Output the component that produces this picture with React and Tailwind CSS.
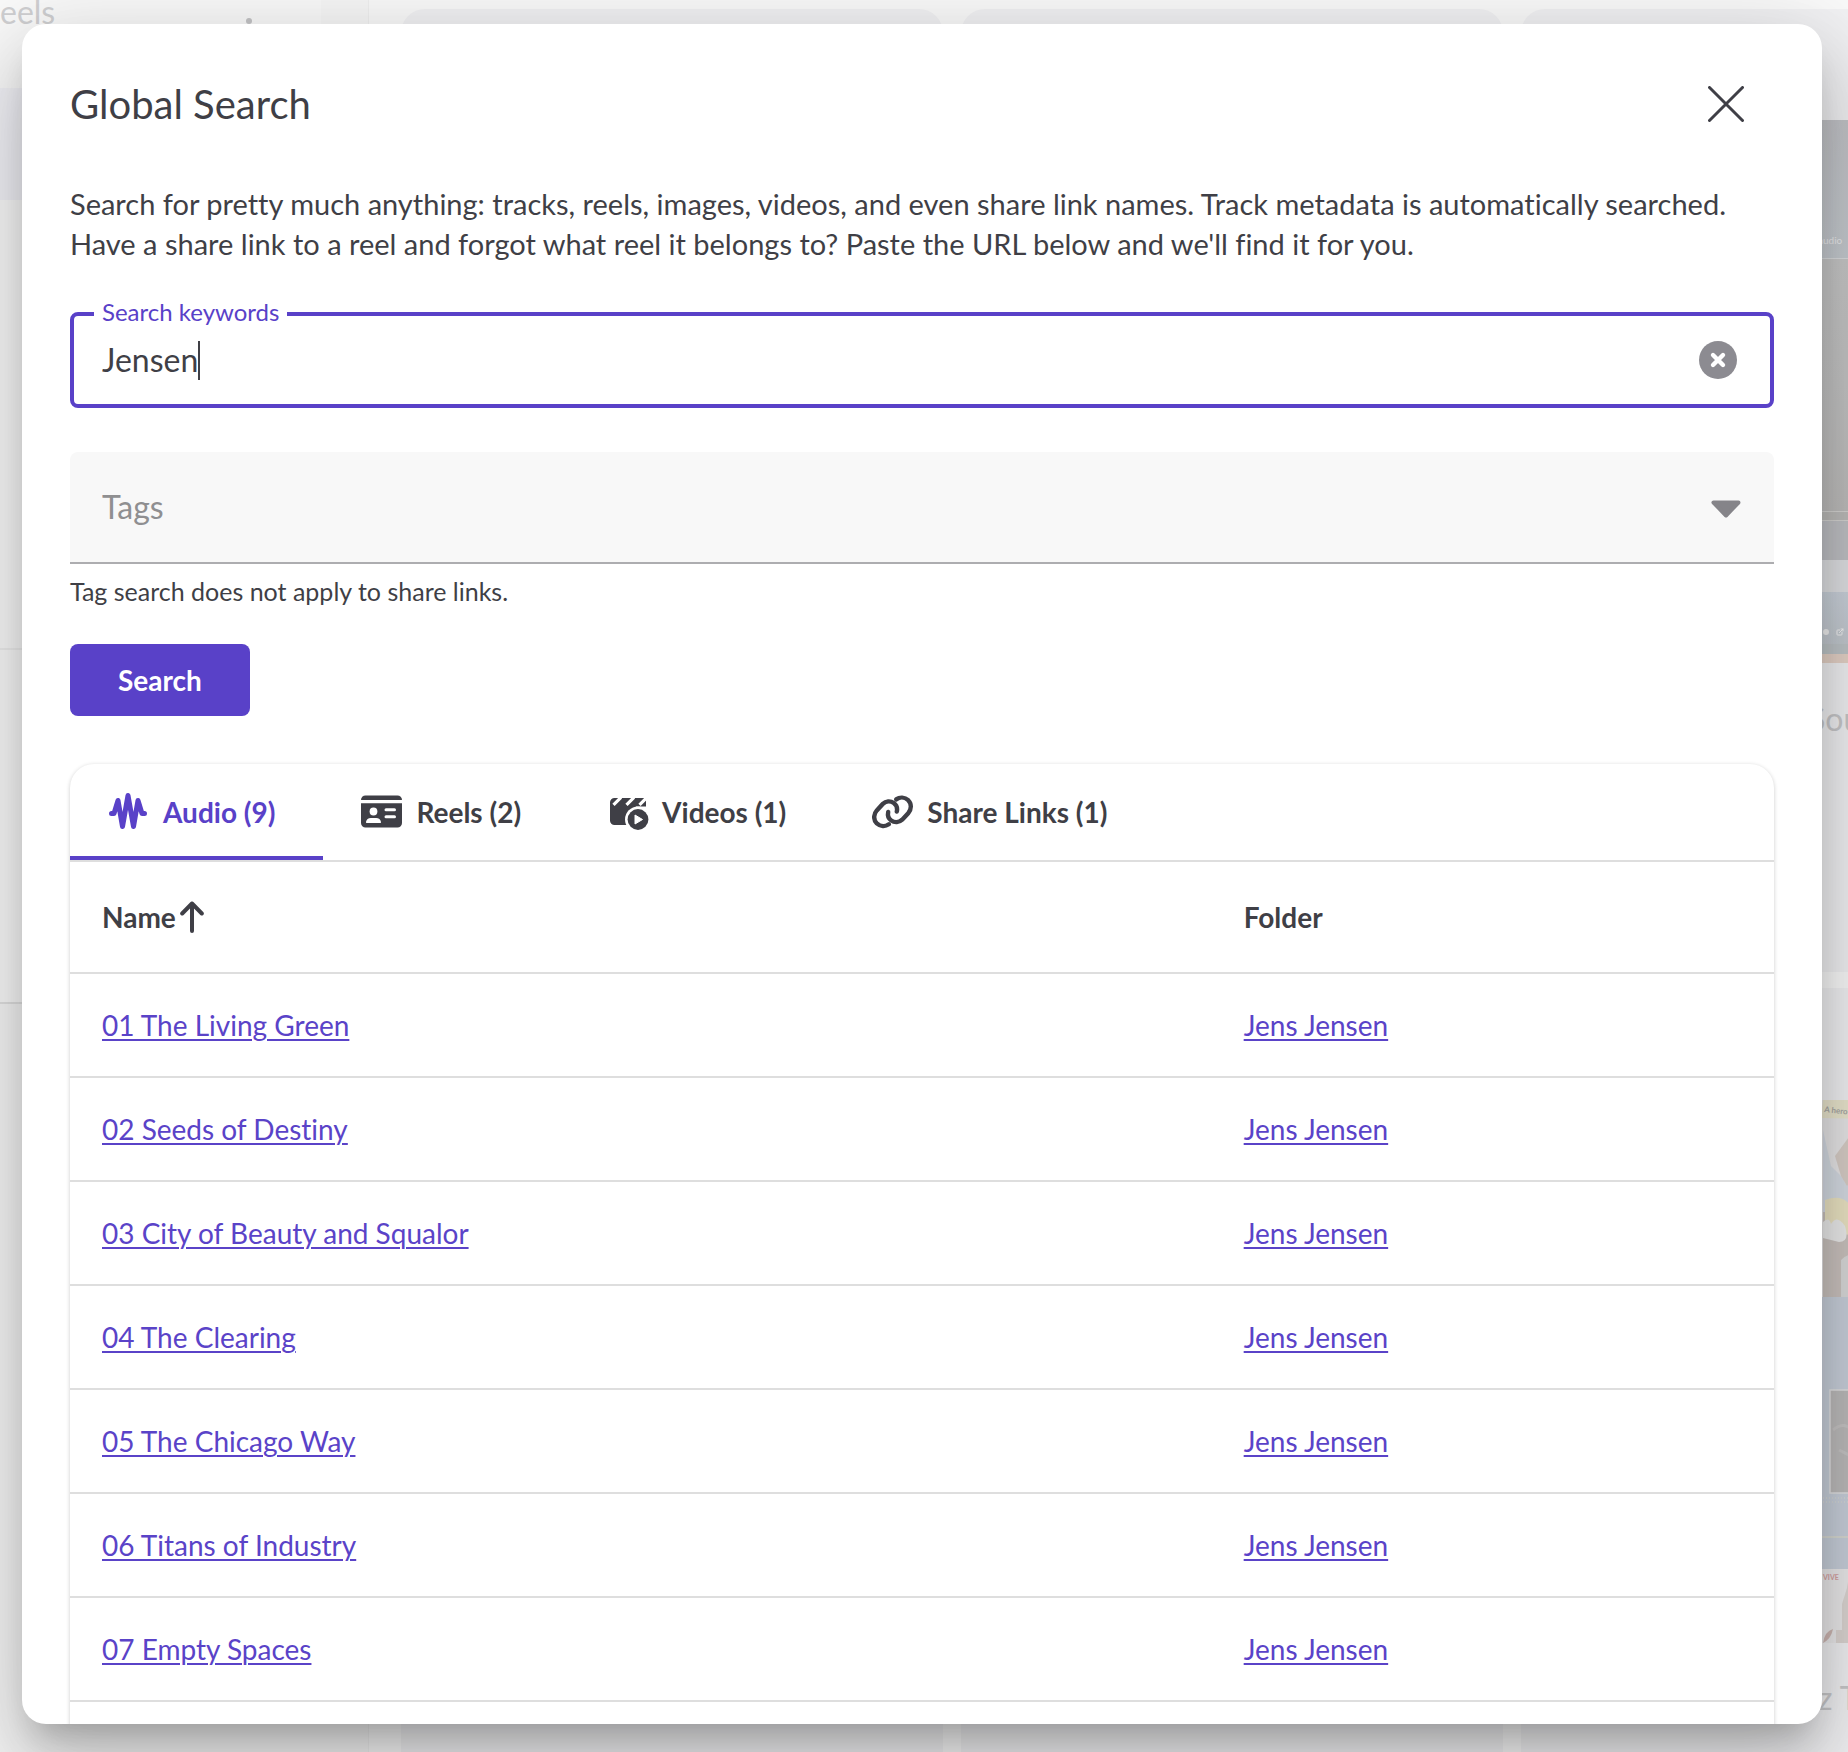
import { useState } from "react";
import { ExternalLink } from "lucide-react";

const tracks = [
  { name: "01 The Living Green", folder: "Jens Jensen" },
  { name: "02 Seeds of Destiny", folder: "Jens Jensen" },
  { name: "03 City of Beauty and Squalor", folder: "Jens Jensen" },
  { name: "04 The Clearing", folder: "Jens Jensen" },
  { name: "05 The Chicago Way", folder: "Jens Jensen" },
  { name: "06 Titans of Industry", folder: "Jens Jensen" },
  { name: "07 Empty Spaces", folder: "Jens Jensen" },
];

function WaveIcon() {
  return (
    <svg
      viewBox="0 0 42 40"
      className="h-10 w-[42px]"
      fill="none"
      stroke="currentColor"
      strokeWidth="5"
      strokeLinecap="round"
      strokeLinejoin="round"
    >
      <path d="M3.5 21.5H6L10 8.5l4.5 26L20 3.5l5.5 31L30 8.500l4 13h2.500" />
    </svg>
  );
}

function ReelIcon() {
  return (
    <svg viewBox="0 0 42 40" className="h-10 w-[42px]" fill="currentColor">
      <path d="M4.500 3.500h32a4.500 4.500 0 0 1 4.500 4.500H0a4.500 4.500 0 0 1 4.500-4.500Z" />
      <path d="M0 11.200h41V31a4.500 4.500 0 0 1-4.500 4.500h-32A4.500 4.500 0 0 1 0 31V11.200Z" />
      <g fill="#fff">
        <ellipse cx="12.500" cy="19.600" rx="3.900" ry="4" />
        <path d="M10 26h5a5 5 0 0 1 5 4c.1.600-.3 1-.9 1H5.900c-.6 0-1-.4-.9-1a5 5 0 0 1 5-4Z" />
        <rect x="23.500" y="16.200" width="11.500" height="3" rx="1.500" />
        <rect x="23.500" y="23.200" width="11.500" height="3" rx="1.500" />
      </g>
    </svg>
  );
}

function VideoIcon() {
  return (
    <svg viewBox="0 0 42 40" className="h-10 w-[42px]" fill="currentColor">
      <path d="M7.500 6H39v27H7.500A4.500 4.500 0 0 1 3 28.500v-18A4.500 4.500 0 0 1 7.500 6Z" />
      <path d="M6.500 12.800l7.500-7.500M19.500 12.800l7.500-7.500M32.500 12.800l7.500-7.500" stroke="#fff" strokeWidth="3.200" />
      <path d="M29 14.500h13V40H29z" fill="#fff" />
      <circle cx="31" cy="27.500" r="13" fill="#fff" />
      <circle cx="31" cy="27.500" r="10.400" />
      <path d="M28 23l7.500 4.500L28 32z" fill="#fff" stroke="#fff" strokeLinejoin="round" />
    </svg>
  );
}

function ShareIcon() {
  return (
    <svg
      viewBox="0 0 42 40"
      className="h-10 w-[42px]"
      fill="none"
      stroke="currentColor"
      strokeWidth="4.400"
      strokeLinecap="round"
    >
      <path d="M16.200 20c-.8 3.500.3 6.500 3 8.500 3.500 2.500 8 2 11-.8l6-6.500c3.500-4 3.500-9.500 0-13-3.500-3.200-8.500-3.300-12-.8" />
      <path d="M24.800 19.600c.8-3.500-.3-6.500-3-8.500-3.500-2.500-8-2-11 .8l-6 6.500c-3.500 4-3.500 9.500 0 13 3.500 3.200 8.500 3.300 12 .8" />
    </svg>
  );
}

const tabs = [
  { id: "audio", label: "Audio (9)", Icon: WaveIcon },
  { id: "reels", label: "Reels (2)", Icon: ReelIcon },
  { id: "videos", label: "Videos (1)", Icon: VideoIcon },
  { id: "links", label: "Share Links (1)", Icon: ShareIcon },
];

// The reels page, washed out behind the open dialog
function PageBehind() {
  return (
    <div aria-hidden="true" className="absolute inset-0 flex overflow-hidden bg-[#fafafa]">
      <aside className="flex w-[321px] shrink-0 flex-col">
        <div className="flex h-[88px] items-start justify-between pr-[69px]">
          <span className="text-[32px] leading-[24px] text-[#d0d0d2]">eels</span>
          <span className="mt-[18px] size-1.5 rounded-full bg-[#c4c4c6]" />
        </div>
        <div className="h-28 bg-[#f3f3f8]" />
        <div className="h-[450px] border-b-2 border-[#efefef]" />
        <div className="h-[354px] border-b-2 border-[#e2e2e2]" />
        <div className="flex-1 bg-[#f7f7f7]" />
      </aside>
      <div className="w-12 shrink-0 border-r border-[#f0f0f0] bg-[#f7f7f7]" />
      <main className="flex flex-1 gap-[18px] pt-[9px] pl-8">
        <div className="w-[542px] shrink-0 rounded-t-3xl bg-[#f2f2f4]" />
        <div className="w-[542px] shrink-0 rounded-t-3xl bg-[#f2f2f4]" />
        <div className="flex w-[542px] shrink-0 flex-col gap-4">
          <div className="h-[963px] shrink-0 overflow-hidden rounded-3xl bg-[#f2f2f4] pt-[111px]">
            <div className="h-[139px] border-b border-[#dcdee0] bg-linear-to-b from-[#c3c4c8] to-[#c6cbd0] pt-[110px] pl-[297px] text-[10px] leading-5 text-[#ececee]">
              audio
            </div>
            <div className="h-[252px] bg-linear-to-b from-[#c8c8c8] via-[#c4c4c4] to-[#bebdbc]" />
            <div className="h-[10px] border-y border-[#d6d5d3] bg-[#bdbcba]" />
            <div className="h-[39px] bg-[#c0c1c5]" />
            <div className="h-8 bg-[#e0e1e4]" />
            <div className="flex h-[52px] items-end gap-[7px] bg-linear-to-b from-[#cbd2db] to-[#c3c9cf] pb-2 pl-[302px] text-[#f4f4f4]">
              <span className="mb-px size-1.5 rounded-full bg-[#f0f0f0]" />
              <ExternalLink size={8} strokeWidth={3} />
            </div>
            <div className="h-[10px] bg-[#bfc5c8]" />
            <div className="h-[9px] bg-[#e6d3c8]" />
            <div className="pt-[36px] pl-[287px] text-[32px] leading-[40px] text-[#c9c9cb]">Sou</div>
          </div>
          <div className="flex-1 rounded-t-3xl bg-[#f2f2f4] pt-28">
            <svg viewBox="0 0 542 543" className="h-[543px] w-full">
              <rect width="542" height="197" fill="#e8e7e8" />
              <path d="M302 0h240v8q-18 8-28 6t-14-4q-20 12-200 8Z" fill="#ebe7cf" />
              <path d="M302 30l8 36 22 22-4-32 14-24v165H302Z" fill="#d6dce4" />
              <path d="M314 56l16-22 12-10v42l-16 20-6-10Z" fill="#d9cfc8" />
              <path d="M302 112h40v85H302Z" fill="#cbc3bf" />
              <path d="M304 100q16-6 24 4t14 2v28q-24 4-38-10Z" fill="#ece5c4" />
              <path d="M302 122q6-6 8 2 6-10 14 2 5 16-6 16-8-2-16-4Z" fill="#ececec" />
              <path d="M320 160q10-10 22-2v39h-22Z" fill="#dadada" />
              <text x="303" y="12" fontSize="8" fontWeight="bold" fill="#a9a9a6" transform="rotate(6 303 12)">
                A hero
              </text>
              <rect y="197" width="542" height="272" fill="#c9d0db" />
              <rect x="309" y="290" width="233" height="103" fill="#bdbbbb" stroke="#e2e2e4" strokeWidth="1.500" />
              <path d="M312 330q12-10 20 2t10 6M318 350l16 8" fill="none" stroke="#c6c4c4" strokeWidth="3" />
              <path d="M302 398h40M302 402h40" stroke="#dddcd4" strokeWidth="1" strokeDasharray="1 2" />
              <path d="M0 437h542" stroke="#e6e3cc" />
              <rect y="469" width="542" height="74" fill="#ebeaeb" />
              <text x="302" y="480" fontSize="7" fontWeight="bold" fill="#d6a3a3">
                VIVE
              </text>
              <path d="M302 543q2-12 10-14-2 10-10 14Z" fill="#cfb9b4" />
              <path d="M315 543v-13h6v-26l5-16 2-12h14v67Z" fill="#ddd6d3" />
            </svg>
            <div className="pt-[33px] pl-[297px] text-[32px] leading-[44px] text-[#c9c9cb]">z T</div>
          </div>
        </div>
      </main>
    </div>
  );
}

function ResultsTable() {
  return (
    <table className="w-full table-fixed text-left">
      <thead>
        <tr className="h-[111px] border-b-2 border-[#dedede]">
          <th className="w-[67%] px-8 font-bold">
            <button type="button" className="flex items-center gap-1">
              Name
              <svg
                viewBox="0 0 24 32"
                className="h-8 w-6"
                fill="none"
                stroke="currentColor"
                strokeWidth="4"
                strokeLinecap="round"
                strokeLinejoin="round"
              >
                <path d="M12 30V2.500M2.200 12.500L12 2.500l9.800 10" />
              </svg>
            </button>
          </th>
          <th className="px-8 font-bold">Folder</th>
        </tr>
      </thead>
      <tbody className="text-[#5a43c8]">
        {tracks.map((track) => (
          <tr key={track.name} className="h-[104px] border-b-2 border-[#dedede]">
            <td className="px-8">
              <a href="#track" className="underline decoration-2 underline-offset-3">
                {track.name}
              </a>
            </td>
            <td className="px-8">
              <a href="#folder" className="underline decoration-2 underline-offset-3">
                {track.folder}
              </a>
            </td>
          </tr>
        ))}
      </tbody>
    </table>
  );
}

export default function App() {
  const [keywords, setKeywords] = useState("Jensen");
  const [activeTab, setActiveTab] = useState("audio");

  return (
    <div className="relative h-screen overflow-hidden pt-6 pr-[26px] pb-7 pl-[22px] font-['Lato',sans-serif] text-[28px] leading-[40px] text-[#3f3f46] [font-variant-ligatures:none]">
      <PageBehind />

      <div
        role="dialog"
        aria-labelledby="search-title"
        className="relative h-full overflow-hidden rounded-3xl bg-white px-12 pt-12 shadow-[0_22px_30px_-14px_rgba(0,0,0,0.2),0_48px_76px_6px_rgba(0,0,0,0.14),0_18px_92px_16px_rgba(0,0,0,0.12)]"
      >
        <header className="flex h-16 items-center justify-between pr-[30px]">
          <h2 id="search-title" className="text-[40px]">
            Global Search
          </h2>
          <button type="button" aria-label="Close">
            <svg
              viewBox="0 0 36 36"
              className="size-9"
              fill="none"
              stroke="currentColor"
              strokeWidth="3"
              strokeLinecap="round"
            >
              <path d="M1.500 1.500l33 33M34.500 1.500l-33 33" />
            </svg>
          </button>
        </header>

        <p className="mt-12 text-[29px]">
          Search for pretty much anything: tracks, reels, images, videos, and even share link names. Track
          metadata is automatically searched. Have a share link to a reel and forgot what reel it belongs to?
          Paste the URL below and we'll find it for you.
        </p>

        <form onSubmit={(e) => e.preventDefault()}>
          <div className="relative mt-12 flex h-24 items-center rounded-lg border-4 border-[#5941c8] pr-[33px] pl-7">
            <label
              htmlFor="keywords"
              className="absolute -top-5 left-5 bg-white px-2 text-[24px] leading-8 text-[#5941c8]"
            >
              Search keywords
            </label>
            <input
              id="keywords"
              type="text"
              value={keywords}
              onChange={(e) => setKeywords(e.target.value)}
              className="field-sizing-content text-[32px] caret-transparent outline-none"
            />
            <span className="h-[39px] w-0.5 bg-[#3f3f46]" />
            <button
              type="button"
              aria-label="Clear"
              onClick={() => setKeywords("")}
              className="ml-auto"
            >
              <svg viewBox="0 0 38 38" className="size-[38px]">
                <circle cx="19" cy="19" r="19" fill="#8c8b91" />
                <path d="M14 14l10 10M24 14L14 24" stroke="#fff" strokeWidth="4.400" strokeLinecap="round" />
              </svg>
            </button>
          </div>

          <div className="relative mt-11">
            <select
              aria-label="Tags"
              className="block h-28 w-full appearance-none rounded-t-lg border-b-2 border-[#adadb0] bg-[#f8f8f8] px-8 text-[32px] text-[#8f8f91] outline-none"
            >
              <option>Tags</option>
            </select>
            <svg
              viewBox="0 0 30 18"
              className="pointer-events-none absolute top-12 right-[33px] h-[18px] w-[30px]"
              fill="#858489"
              stroke="#858489"
              strokeWidth="4"
              strokeLinejoin="round"
            >
              <path d="M2.500 2.500h25L15 15.500z" />
            </svg>
          </div>
          <p className="mt-3 text-[25px] leading-[30px]">Tag search does not apply to share links.</p>

          <button type="submit" className="mt-[38px] block h-[72px] rounded-lg bg-[#5941c8] px-12 font-bold text-white">
            Search
          </button>
        </form>

        <section className="mt-12 rounded-3xl shadow-[0_1px_4px_rgba(0,0,0,0.2)]">
          <div role="tablist" className="flex border-b-2 border-[#dedede]">
            {tabs.map(({ id, label, Icon }) => (
              <button
                key={id}
                type="button"
                role="tab"
                aria-selected={activeTab === id}
                onClick={() => setActiveTab(id)}
                className={`flex h-24 items-center gap-[13px] border-b-4 pt-1 pr-12 pl-[38px] font-bold ${
                  activeTab === id ? "border-[#5941c8] text-[#5941c8]" : "border-transparent"
                }`}
              >
                <Icon />
                {label}
              </button>
            ))}
          </div>
          <ResultsTable />
          <div className="h-24" />
        </section>
      </div>
    </div>
  );
}
